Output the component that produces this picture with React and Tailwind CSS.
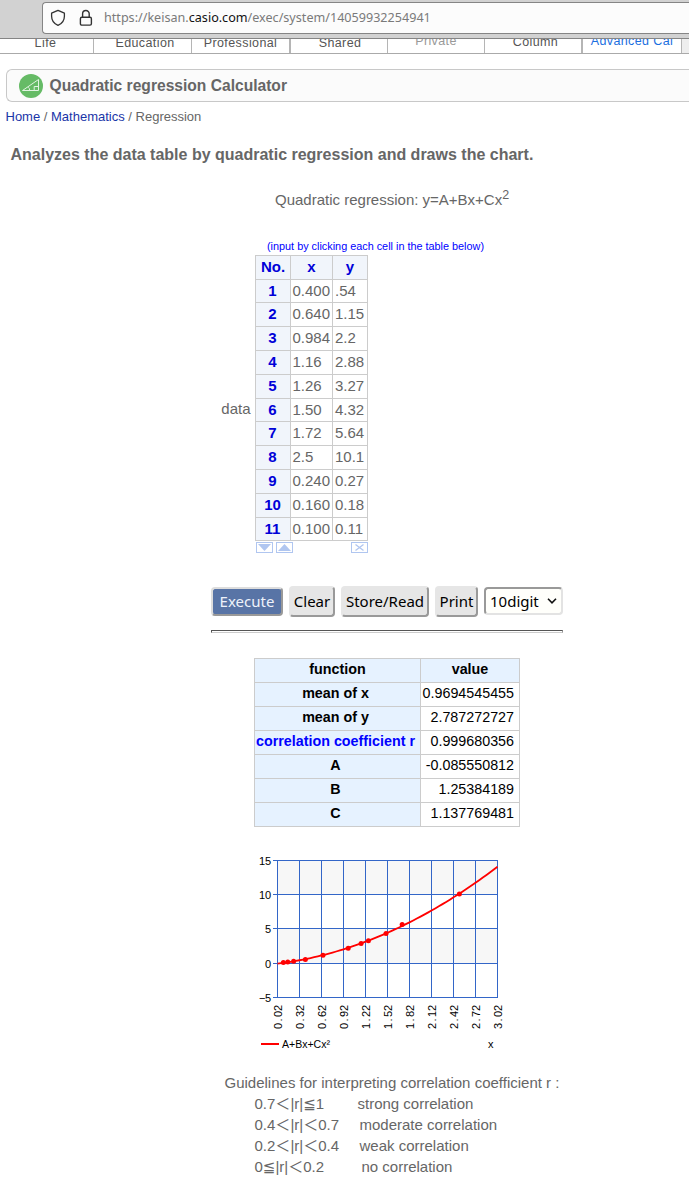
import React from "react";

const tabs = [
  { label: "Life", cls: "w-[94px] border-r text-[#555] pb-[3px] pr-[2px]" },
  { label: "Education", cls: "w-[98px] border-r text-[#555] pb-[3px] pl-[5px]" },
  { label: "Professional", cls: "w-[99px] border-r-2 text-[#555] pb-[3px]" },
  { label: "Shared", cls: "w-[97px] border-r text-[#555] pb-[3px] pl-[2px]" },
  { label: "Private", cls: "w-[97px] border-r text-[#999] pb-[5px]" },
  { label: "Column", cls: "w-[98px] border-r-2 text-[#555] pb-[4px] pl-[5px]" },
  { label: "Advanced Cal", cls: "w-[99px] border-r text-[#1b6fe0] pb-[5px]" },
];

const rows = [
  ["0.400", ".54", "h-[23px]"],
  ["0.640", "1.15", "h-[24px]"],
  ["0.984", "2.2", "h-[24px]"],
  ["1.16", "2.88", "h-[24px]"],
  ["1.26", "3.27", "h-[24px]"],
  ["1.50", "4.32", "h-[23px]"],
  ["1.72", "5.64", "h-[24px]"],
  ["2.5", "10.1", "h-[24px]"],
  ["0.240", "0.27", "h-[24px]"],
  ["0.160", "0.18", "h-[24px]"],
  ["0.100", "0.11", "h-[23px]"],
];

const results = [
  ["mean of x", "0.9694545455"],
  ["mean of y", "2.787272727"],
  ["correlation coefficient r", "0.999680356"],
  ["A", "-0.085550812"],
  ["B", "1.25384189"],
  ["C", "1.137769481"],
];

const guidelines = [
  ["0.7＜|r|≦1", "strong correlation", "w-[103px]"],
  ["0.4＜|r|＜0.7", "moderate correlation", "w-[105px]"],
  ["0.2＜|r|＜0.4", "weak correlation", "w-[105px]"],
  ["0≦|r|＜0.2", "no correlation", "w-[107px]"],
];

function BrowserBar() {
  return (
    <header className="flex h-[39px] items-start border-b border-[#858585] bg-[#d2d2d2] pl-[42px] pt-[2px]">
      <div className="flex h-[32px] flex-1 items-center rounded-l-[4px] border border-r-0 border-[#858585] bg-[#fcfcfc] pl-[7px]">
        <svg width="16" height="18" viewBox="0 0 16 18" fill="none" stroke="#333" strokeWidth="1.3" strokeLinejoin="round">
          <path d="M8 1.4 L14.4 4.2 V7.2 C14.4 11.2 12 14.6 8 16.4 C4 14.6 1.6 11.2 1.6 7.2 V4.2 Z" />
        </svg>
        <svg className="ml-[13px]" width="14" height="18" viewBox="0 0 14 18" fill="none" stroke="#333" strokeWidth="1.4">
          <rect x="1.4" y="8.3" width="11" height="7.8" rx="1.4" />
          <path d="M3.6 8.2 V4.8 A3.3 3.3 0 0 1 10.2 4.8 V8.2" />
        </svg>
        <span className="ml-[11px] font-['Noto_Sans',sans-serif] text-[12.6px] leading-[18px] whitespace-nowrap text-[#7a7a7a]">
          https://keisan.<span className="text-[#111]">casio.com</span>/exec/system/14059932254941
        </span>
      </div>
    </header>
  );
}

function MonoText({ text, ...rest }) {
  const xs = [...text].map((c, i) => i * 6 + (c === "." ? 1.5 : 0)).join(" ");
  return (
    <text x={xs} y="0" {...rest}>
      {text}
    </text>
  );
}

function Chart() {
  const px = (x) => 27.5 + ((x - 0.02) / 3) * 220;
  const py = (y) => 108.2 - y * 6.85;
  const f = (x) => -0.085550812 + 1.25384189 * x + 1.137769481 * x * x;
  const curve = Array.from({ length: 61 }, (_, i) => 0.02 + i * 0.05)
    .map((x) => `${px(x).toFixed(2)},${py(f(x)).toFixed(2)}`)
    .join(" ");
  const ys = [
    ["15", 5.5],
    ["10", 39.5],
    ["5", 73.5],
    ["0", 108.5],
    ["−5", 142.5],
  ];
  const xs = ["0.02", "0.32", "0.62", "0.92", "1.22", "1.52", "1.82", "2.12", "2.42", "2.72", "3.02"];
  return (
    <svg className="block font-['Liberation_Sans',sans-serif] text-[11px]" width="260" height="200" viewBox="0 0 260 200">
      <rect x="27" y="5" width="221" height="34" fill="#f7f7f7" />
      <rect x="27" y="73" width="221" height="35" fill="#f7f7f7" />
      <g stroke="#3366c8" strokeWidth="1" shapeRendering="crispEdges">
        {ys.map(([t, y]) => (
          <line key={t} x1="23" x2="248" y1={y} y2={y} />
        ))}
        {xs.map((t, i) => (
          <line key={t} x1={27.5 + i * 22} x2={27.5 + i * 22} y1="5" y2="143" />
        ))}
      </g>
      {ys.map(([t, y]) => (
        <MonoText key={t} text={t} transform={`translate(${21 - t.length * 6} ${y + 4})`} />
      ))}
      {xs.map((t, i) => (
        <MonoText key={t} text={t} transform={`translate(${31.5 + i * 22} 174) rotate(-90)`} />
      ))}
      <polyline points={curve} fill="none" stroke="#f00" strokeWidth="1.8" />
      {rows.map(([x, y]) => (
        <circle key={x} cx={px(Number(x))} cy={py(Number(y))} r="2.5" fill="#f00" />
      ))}
      <rect x="11" y="188" width="18" height="2" fill="#f00" />
      <text x="32" y="193" textLength="48" lengthAdjust="spacingAndGlyphs">
        A+Bx+Cx²
      </text>
      <MonoText text="x" transform="translate(238 193)" />
    </svg>
  );
}

function DataTable() {
  return (
    <div className="w-[113px] border-l border-t border-[#ccc] text-[15px]">
      <div className="flex h-[24px] text-center leading-[22px] font-bold text-[#0000d8]">
        <div className="w-[35px] border-r border-b border-[#ccc] bg-[#f1f5fb]">No.</div>
        <div className="w-[42px] border-r border-b border-[#ccc] bg-[#f1f5fb]">x</div>
        <div className="w-[35px] border-r border-b border-[#ccc] bg-[#f1f5fb]">y</div>
      </div>
      {rows.map(([x, y, h], i) => (
        <div key={x} className={`flex leading-[22px] text-[#666] ${h}`}>
          <div className="w-[35px] border-r border-b border-[#ccc] bg-[#f1f5fb] pr-px text-center font-bold text-[#0000d8]">{i + 1}</div>
          <div className="w-[42px] border-r border-b border-[#ccc] pl-[1.5px]">{x}</div>
          <div className="w-[35px] border-r border-b border-[#ccc] pl-[2px]">{y}</div>
        </div>
      ))}
    </div>
  );
}

function TableControls() {
  return (
    <div className="mt-[1px] flex w-[113px] pl-[1px]">
      <svg width="17" height="11" viewBox="0 0 17 11">
        <rect x="0.5" y="0.5" width="16" height="10" fill="#fff" stroke="#b0c6f0" />
        <path d="M2 2 H15 L8.5 9 Z" fill="#b0c6f0" />
      </svg>
      <svg className="ml-[3px]" width="17" height="11" viewBox="0 0 17 11">
        <rect x="0.5" y="0.5" width="16" height="10" fill="#fff" stroke="#b0c6f0" />
        <path d="M2 9 H15 L8.5 2 Z" fill="#b0c6f0" />
      </svg>
      <svg className="ml-auto" width="17" height="11" viewBox="0 0 17 11">
        <rect x="0.5" y="0.5" width="16" height="10" fill="#fff" stroke="#b0c6f0" />
        <path d="M4.5 2.5 L12.5 8.5 M12.5 2.5 L4.5 8.5" stroke="#b0c6f0" strokeWidth="1.3" />
      </svg>
    </div>
  );
}

const button =
  "h-[31px] rounded-[4px] border-2 border-t-[#e6e6e6] border-l-[#e6e6e6] border-r-[#999] border-b-[#999] bg-[#e6e6e6] leading-[26px] pb-px text-center text-black";

export default function App() {
  return (
    <div className="h-[1187px] w-[689px] overflow-hidden bg-white font-['Liberation_Sans',Arial,sans-serif] text-[#666]">
      <BrowserBar />
      <nav className="flex h-[15px] w-[689px] overflow-hidden border-b border-[#aaa] bg-white text-[12.5px] leading-[14px] tracking-[0.4px]">
        {tabs.map((t) => (
          <div key={t.label} className={`flex h-[14px] shrink-0 items-end justify-center overflow-hidden border-[#b5b5b5] whitespace-nowrap ${t.cls}`}>
            {t.label}
          </div>
        ))}
        <div className="flex-1 bg-[#eee]" />
      </nav>

      <div className="mt-[15px] ml-[6px] flex h-[33px] items-center rounded-l-[6px] border border-r-0 border-[#c8c8c8] bg-[#fbfbfb] pl-[12px]">
        <svg width="24" height="24" viewBox="0 0 24 24">
          <circle cx="12" cy="12" r="12" fill="#66bb66" />
          <path d="M3.5 16.5 L19.5 5.5 V16.5 Z M15.2 16.3 V12.5 H19.3 M9 13.2 Q11 14.5 10.6 16.3" fill="none" stroke="#e3f4e3" strokeWidth="1" />
        </svg>
        <h1 className="ml-[6.5px] text-[15.6px] font-bold">Quadratic regression Calculator</h1>
      </div>

      <div className="mt-[6px] ml-[5.5px] text-[13px] leading-[18px]">
        <span className="text-[#1a35a8]">Home</span> / <span className="text-[#1a35a8]">Mathematics</span> / Regression
      </div>

      <h2 className="mt-[19px] ml-[10.5px] text-[16px] leading-[20px] font-bold">
        Analyzes the data table by quadratic regression and draws the chart.
      </h2>

      <p className="mt-[25px] ml-[275px] h-[20px] text-[15px] leading-[20px] whitespace-nowrap">
        Quadratic regression: y=A+Bx+Cx<sup className="text-[12.5px]">2</sup>
      </p>

      <div className="mt-[28px] ml-[267px] h-[16px] text-[10.85px] leading-[16px] text-[#0000ff]">
        (input by clicking each cell in the table below)
      </div>

      <div className="mt-[1px] flex">
        <div className="w-[255px] pt-[143px] pr-[4.5px] text-right text-[15px] leading-[22px]">data</div>
        <div>
          <DataTable />
          <TableControls />
        </div>
      </div>

      <div className="mt-[33px] ml-[211px] flex h-[31px] w-[352px] font-['Noto_Sans',sans-serif] text-[15px]">
        <button className="mt-[1px] h-[29px] w-[72px] rounded-[4px] border-2 border-t-[#ddd] border-l-[#ddd] border-r-[#999] border-b-[#999] bg-[#5874a6] leading-[25px] text-[#eef2fa]">
          Execute
        </button>
        <button className={`ml-[6px] w-[46px] ${button}`}>Clear</button>
        <button className={`ml-[6px] w-[88px] ${button}`}>Store/Read</button>
        <button className={`ml-[6px] w-[43px] ${button}`}>Print</button>
        <div className="mt-[1px] ml-[6px] flex h-[28px] w-[79px] items-center rounded-[4px] border-2 border-t-[#999] border-l-[#999] border-r-[#e3e3e3] border-b-[#e3e3e3] bg-[#fffffb] pl-[4px] text-black">
          10digit
          <svg className="ml-[8px]" width="10" height="8" viewBox="0 0 10 8" fill="none" stroke="#111" strokeWidth="1.6">
            <path d="M1 1.8 L5 5.8 L9 1.8" />
          </svg>
        </div>
      </div>

      <div className="mt-[13px] ml-[211px] h-[3px] w-[352px] border border-t-[#555] border-l-[#555] border-r-[#999] border-b-[#ccc]" />

      <div className="mt-[25px] ml-[254px] w-[266px] border-t border-l border-[#ccc] text-[14.3px] leading-[20px] text-black">
        <div className="flex h-[24px] text-center font-bold">
          <div className="w-[166px] border-r border-b border-[#ccc] bg-[#e6f2ff]">function</div>
          <div className="w-[99px] border-r border-b border-[#ccc] bg-[#e6f2ff]">value</div>
        </div>
        {results.map(([name, value], i) => (
          <div key={name} className="flex h-[24px]">
            <div className={`w-[166px] border-r border-b border-[#ccc] bg-[#e6f2ff] pr-[4px] text-center font-bold whitespace-nowrap ${i === 2 ? "text-[#0000ff]" : ""}`}>
              {name}
            </div>
            <div className="w-[99px] border-r border-b border-[#ccc] pr-[5px] text-right">{value}</div>
          </div>
        ))}
      </div>

      <div className="mt-[28px] ml-[250px]">
        <Chart />
      </div>

      <div className="mt-[17px] ml-[224.5px] font-['Liberation_Sans','Noto_Sans_CJK_JP',sans-serif] text-[15px] leading-[21px]">
        <div className="h-[21px]">Guidelines for interpreting correlation coefficient r :</div>
        {guidelines.map(([range, text, w]) => (
          <div key={range} className="flex h-[21px] pl-[30px] whitespace-nowrap">
            <span className={w}>
              {[...range].map((c, i) =>
                c === "≦" ? (
                  <span key={i} className="font-['DejaVu_Sans',sans-serif] leading-none">
                    {c}
                  </span>
                ) : (
                  c
                )
              )}
            </span>
            <span>{text}</span>
          </div>
        ))}
      </div>
    </div>
  );
}
